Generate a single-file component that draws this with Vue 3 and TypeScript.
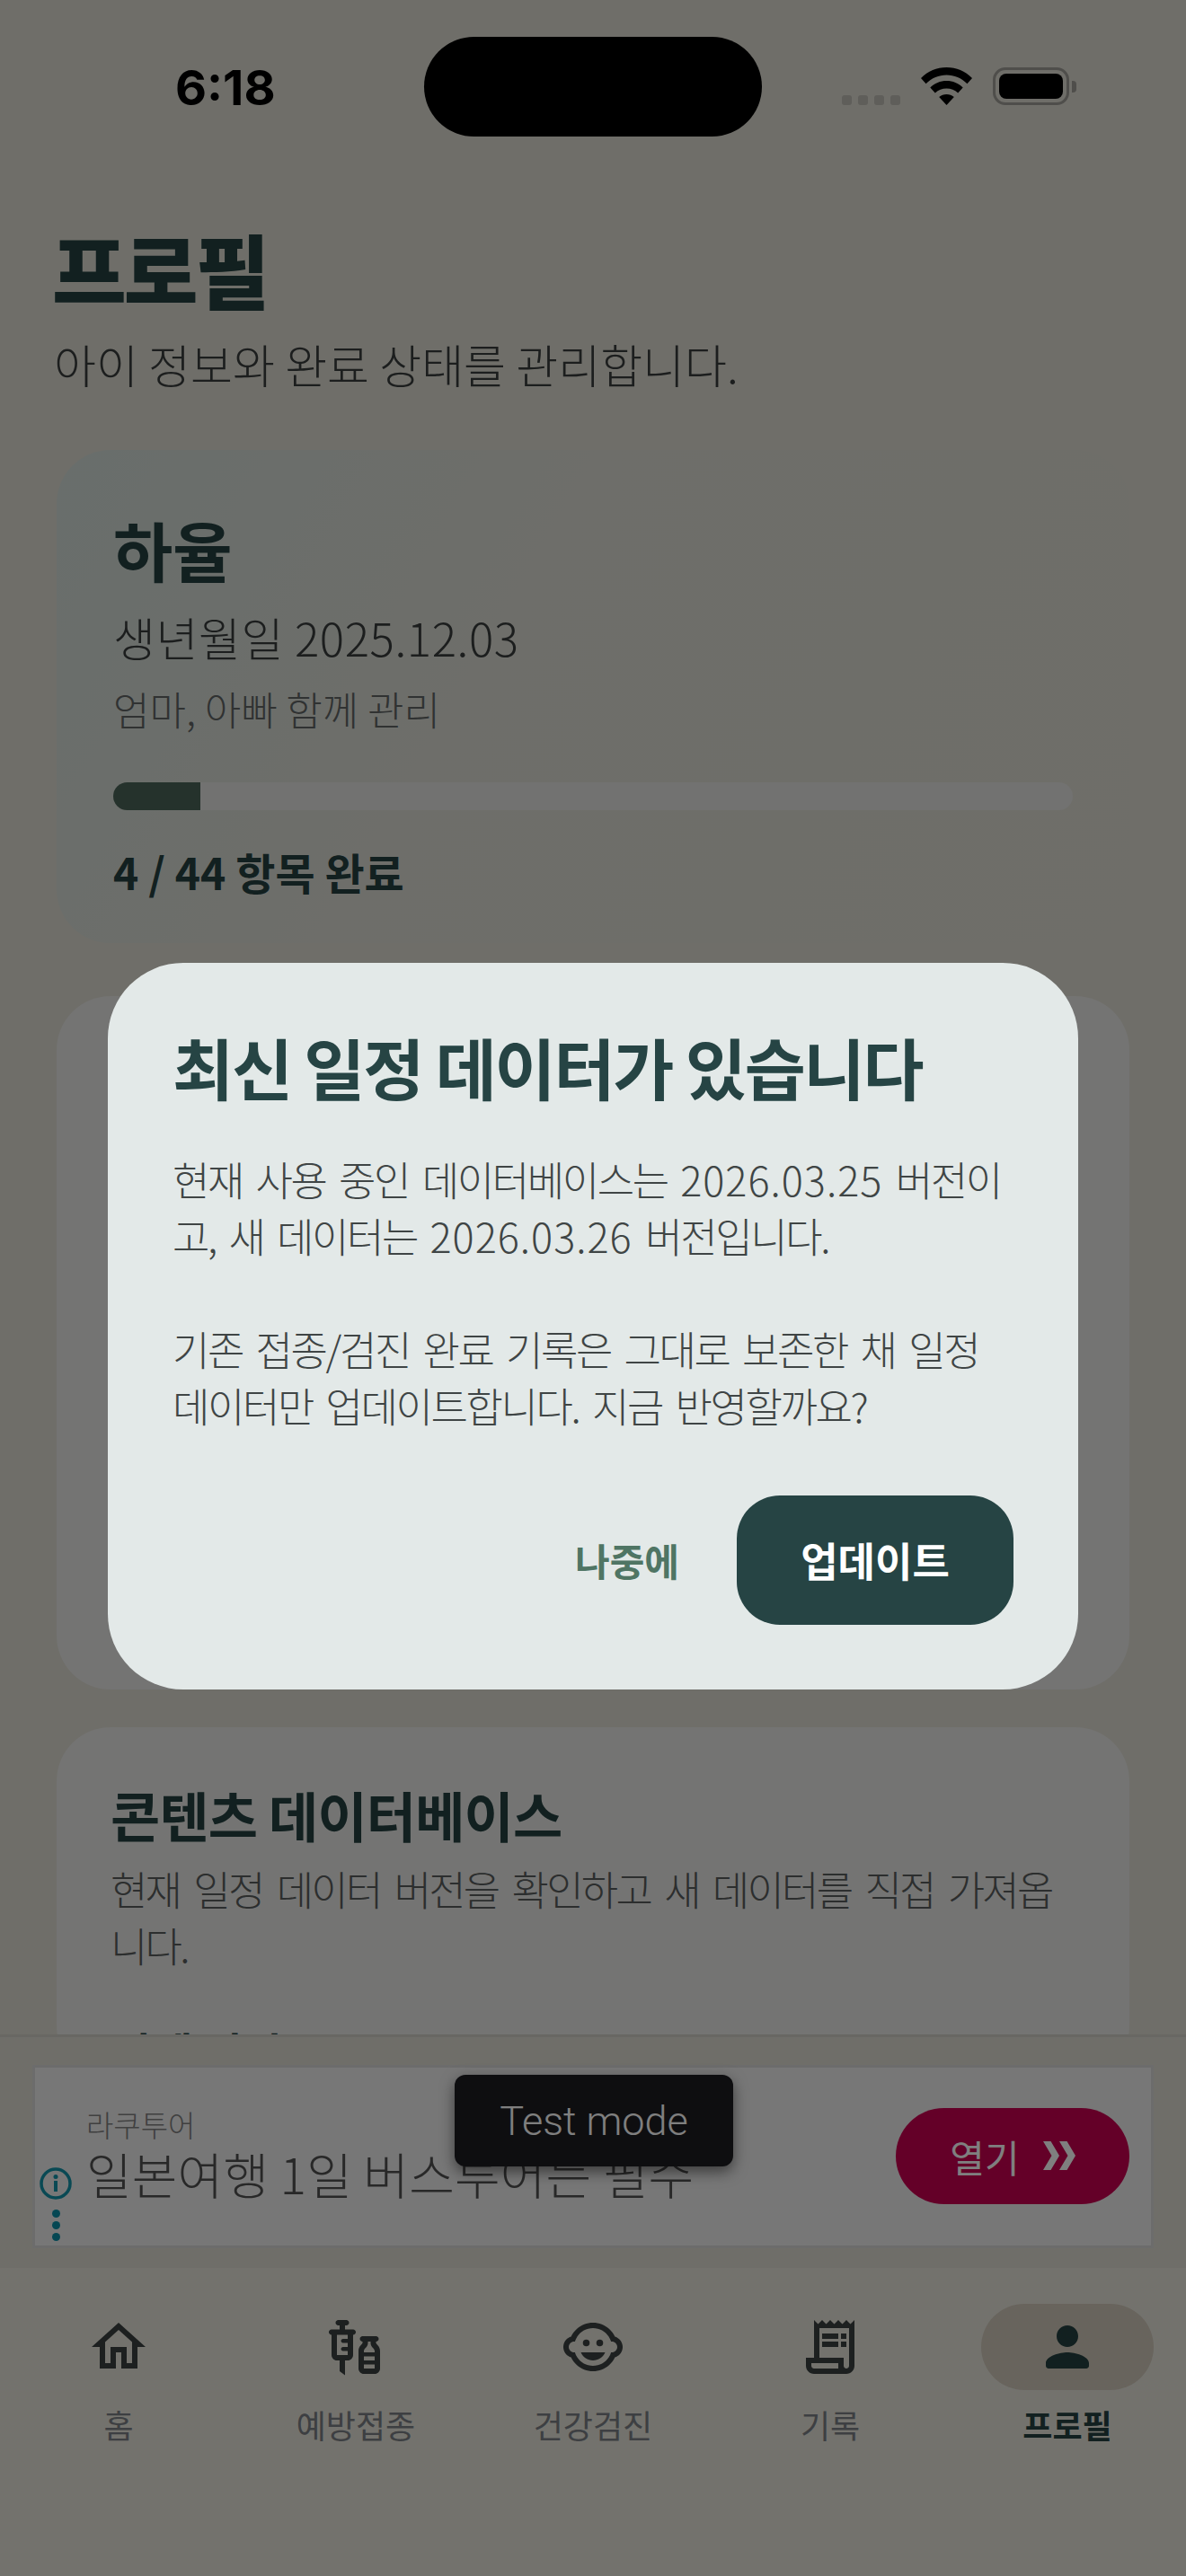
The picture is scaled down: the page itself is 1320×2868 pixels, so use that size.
<script setup lang="ts">
interface Tab {
  label: string
  active?: boolean
  paths: string[]
  dots?: [number, number][]
}

const tabs: Tab[] = [
  { label: '홈', paths: ['M12 5.69l5 4.5V18h-2v-6H9v6H7v-7.81l5-4.5M12 3L2 12h3v8h6v-6h2v6h6v-8h3L12 3z'] },
  {
    label: '예방접종',
    paths: ['M11 5.5H8V4h.5c.55 0 1-.45 1-1s-.45-1-1-1h-3c-.55 0-1 .45-1 1s.45 1 1 1H6v1.5H3c-.55 0-1 .45-1 1s.45 1 1 1V15c0 1.1.9 2 2 2h1v4l2 1.5V17h1c1.1 0 2-.9 2-2V7.5c.55 0 1-.45 1-1s-.45-1-1-1zM9 9H7.25c-.41 0-.75.34-.75.75s.34.75.75.75H9V12H7.25c-.41 0-.75.34-.75.75s.34.75.75.75H9V15H5V7.5h4V9zm10.5 1.5V10c.55 0 1-.45 1-1s-.45-1-1-1h-5c-.55 0-1 .45-1 1s.45 1 1 1v.5c0 .5-1.5 1.16-1.5 3V20c0 1.1.9 2 2 2h4c1.1 0 2-.9 2-2v-6.5c0-1.84-1.5-2.5-1.5-3zm-3 0V10h1v.5c0 1.6 1.5 2 1.5 3v.5h-4v-.5c0-1 1.5-1.4 1.5-3zm2.5 5V17h-4v-1.5h4zM15 20v-1.5h4V20h-4z'],
  },
  {
    label: '건강검진',
    paths: ['M22.94 12.66c.04-.21.06-.43.06-.66s-.02-.45-.06-.66c-.25-1.51-1.36-2.74-2.81-3.17-.53-1.12-1.28-2.1-2.19-2.91C16.36 3.85 14.28 3 12 3s-4.36.85-5.94 2.26c-.92.81-1.67 1.8-2.19 2.91-1.45.43-2.56 1.65-2.81 3.17-.04.21-.06.43-.06.66s.02.45.06.66c.25 1.51 1.36 2.74 2.81 3.17.52 1.11 1.27 2.09 2.17 2.89C7.62 20.14 9.71 21 12 21s4.38-.86 5.97-2.28c.9-.8 1.65-1.79 2.17-2.89 1.44-.43 2.55-1.65 2.8-3.17zM19 14c-.1 0-.19-.02-.29-.03-.2.67-.49 1.29-.86 1.86C16.6 17.74 14.45 19 12 19s-4.6-1.26-5.85-3.17c-.37-.57-.66-1.19-.86-1.86-.1.01-.19.03-.29.03-1.1 0-2-.9-2-2s.9-2 2-2c.1 0 .19.02.29.03.2-.67.49-1.29.86-1.86C7.4 6.26 9.55 5 12 5s4.6 1.26 5.85 3.17c.37.57.66 1.19.86 1.86.1-.01.19-.03.29-.03 1.1 0 2 .9 2 2s-.9 2-2 2zM7.5 14c.76 1.77 2.49 3 4.5 3s3.74-1.23 4.5-3h-9z'],
    dots: [[14.5, 10.5], [9.5, 10.5]],
  },
  {
    label: '기록',
    paths: ['M19.5 3.5L18 2l-1.5 1.5L15 2l-1.5 1.5L12 2l-1.5 1.5L9 2 7.5 3.5 6 2v14H3v3c0 1.66 1.34 3 3 3h12c1.66 0 3-1.34 3-3V2l-1.5 1.5zM15 20H6c-.55 0-1-.45-1-1v-1h10v2zm4-1c0 .55-.45 1-1 1s-1-.45-1-1v-3H8V5h11v14z', 'M9 7h6v2H9zM16 7h2v2h-2zM9 10h6v2H9zM16 10h2v2h-2z'],
  },
  {
    label: '프로필',
    active: true,
    paths: ['M12 12c2.21 0 4-1.79 4-4s-1.79-4-4-4-4 1.79-4 4 1.79 4 4 4zm0 2c-2.67 0-8 1.34-8 4v1c0 .55.45 1 1 1h14c.55 0 1-.45 1-1v-1c0-2.66-5.33-4-8-4z'],
  },
]

const total = 44
const done = 4
const progress = `${(done / total) * 100}%`
</script>

<template>
  <div class="screen">
    <div class="status">
      <span class="time">6:18</span>
      <div class="island"></div>
      <div class="status-right">
        <div class="signal"><i></i><i></i><i></i><i></i></div>
        <svg class="wifi" viewBox="0 0 57 42">
          <path d="M28.5 0C17.5 0 7.8 4.2 0 12l5.6 6.2C12 12 19.8 8.6 28.5 8.6S45 12 51.4 18.2L57 12C49.2 4.2 39.5 0 28.5 0z" />
          <path d="M28.5 15C21.5 15 15.3 17.6 10.3 22.4L15.8 28.5C19.3 25.3 23.7 23.5 28.5 23.5S37.7 25.3 41.2 28.5L46.7 22.4C41.7 17.6 35.5 15 28.5 15z" />
          <path d="M28.5 30C25.3 30 22.5 31.1 20.2 33.1L28.5 42L36.8 33.1C34.5 31.1 31.7 30 28.5 30z" />
        </svg>
        <div class="battery"><div class="battery-fill"></div></div>
        <div class="battery-cap"></div>
      </div>
    </div>

    <main class="content">
      <h1 class="page-title">프로필</h1>
      <p class="page-sub">아이 정보와 완료 상태를 관리합니다.</p>

      <section class="child-card">
        <h2 class="child-name">하율</h2>
        <p class="child-birth">생년월일 2025.12.03</p>
        <p class="child-note">엄마, 아빠 함께 관리</p>
        <div class="track"><div class="track-fill" :style="{ width: progress }"></div></div>
        <p class="track-label">{{ done }} / {{ total }} 항목 완료</p>
      </section>

      <section class="card card-hidden"></section>

      <section class="card">
        <h2 class="card-title">콘텐츠 데이터베이스</h2>
        <p class="card-text">현재 일정 데이터 버전을 확인하고 새 데이터를 직접 가져옵니다.</p>
        <p class="card-sub">상세 버전</p>
      </section>
    </main>

    <div class="ad-area">
      <div class="ad">
        <div class="ad-marks">
          <svg class="ad-info" viewBox="0 0 36 36">
            <circle cx="18" cy="18" r="16" fill="none" stroke="#1293a8" stroke-width="3.5" />
            <circle cx="18" cy="10.5" r="2.5" fill="#1293a8" />
            <rect x="16" y="15" width="4" height="12" fill="#1293a8" />
          </svg>
          <div class="ad-dots"><i></i><i></i><i></i></div>
        </div>
        <div class="ad-copy">
          <span class="ad-brand">라쿠투어</span>
          <span class="ad-head">일본여행 1일 버스투어는 필수</span>
        </div>
        <div class="ad-btn">
          <span>열기</span>
          <svg class="ad-chev" viewBox="0 0 38 34">
            <path d="M0 0h9l10 17L9 34H0l10-17zM19 0h9l10 17-10 17h-9l10-17z" />
          </svg>
        </div>
        <div class="test-badge">Test mode</div>
      </div>
    </div>

    <nav class="tabs">
      <div v-for="tab in tabs" :key="tab.label" class="tab" :class="{ active: tab.active }">
        <div class="tab-icon">
          <svg viewBox="0 0 24 24">
            <path v-for="d in tab.paths" :key="d" :d="d" />
            <circle v-for="c in tab.dots" :key="c[0]" :cx="c[0]" :cy="c[1]" r="1.25" />
          </svg>
        </div>
        <span class="tab-label">{{ tab.label }}</span>
      </div>
    </nav>

    <div class="scrim">
      <div class="dialog">
        <h2 class="dialog-title">최신 일정 데이터가 있습니다</h2>
        <p class="dialog-text">
          현재 사용 중인 데이터베이스는 <span class="num">2026.03.25</span> 버전이고, 새 데이터는 <span class="num">2026.03.26</span> 버전입니다.<br /><br />기존 접종/검진 완료 기록은 그대로 보존한 채 일정<br />데이터만 업데이트합니다. 지금 반영할까요?
        </p>
        <div class="dialog-actions">
          <button class="btn-later">나중에</button>
          <button class="btn-update">업데이트</button>
        </div>
      </div>
    </div>
  </div>
</template>

<style>
html, body {
  margin: 0;
  background: #dedcd2;
}
</style>

<style scoped>
.screen {
  position: relative;
  width: 1320px;
  height: 2868px;
  overflow: hidden;
  display: flex;
  flex-direction: column;
  background: #dedcd2;
  font-family: "Noto Sans CJK KR", "Noto Sans", sans-serif;
  color: #244040;
}

h1, h2, p {
  margin: 0;
}

/* status bar stays above the scrim */
.status {
  position: relative;
  z-index: 3;
  height: 248px;
  flex: none;
}
.time {
  position: absolute;
  left: 195px;
  top: 66px;
  font: 700 54px/64px "Inter", "Liberation Sans", sans-serif;
  letter-spacing: 0;
  color: #000;
}
.island {
  position: absolute;
  left: 472px;
  top: 41px;
  width: 376px;
  height: 111px;
  border-radius: 56px;
  background: #000;
}
.status-right {
  position: absolute;
  left: 937px;
  top: 75px;
  height: 42px;
  display: flex;
  align-items: flex-end;
}
.signal {
  display: flex;
  gap: 7px;
  width: 88px;
}
.signal i {
  width: 11px;
  height: 11px;
  border-radius: 3px;
  background: #5f5e5a;
}
.wifi {
  width: 57px;
  height: 42px;
  fill: #000;
}
.battery {
  box-sizing: border-box;
  width: 85px;
  height: 42px;
  margin-left: 23px;
  padding: 4px;
  border: 3px solid #4f4e4b;
  border-radius: 14px;
}
.battery-fill {
  height: 100%;
  border-radius: 8px;
  background: #000;
}
.battery-cap {
  width: 5px;
  height: 13px;
  margin: 0 0 14px 3px;
  border-radius: 0 4px 4px 0;
  background: #4f4e4b;
}

.content {
  flex: 1;
  min-height: 0;
  overflow: hidden;
  padding: 0 63px;
}
.page-title {
  margin-left: -5px;
  font-size: 90px;
  line-height: 100px;
  font-weight: 900;
  letter-spacing: -3px;
}
.page-sub {
  margin: 24px 0 0 -3px;
  font-size: 51px;
  line-height: 66px;
  font-weight: 300;
  color: #383c3c;
}

.child-card {
  margin-top: 63px;
  height: 549px;
  box-sizing: border-box;
  padding: 67px 63px 0;
  border-radius: 60px;
  background: linear-gradient(120deg, #d2dcd8 0%, #dcdcd4 40%, #dedcd2 100%);
}
.child-name {
  font-size: 72px;
  line-height: 86px;
  font-weight: 700;
}
.child-birth {
  margin-top: 21px;
  font-size: 51px;
  line-height: 68px;
  letter-spacing: 0.6px;
  font-weight: 300;
  color: #383c3c;
}
.child-note {
  margin-top: 18px;
  font-size: 44px;
  line-height: 56px;
  font-weight: 300;
  color: #606464;
}
.track {
  margin-top: 54px;
  height: 31px;
  border-radius: 16px;
  background: #e4e4e2;
  overflow: hidden;
}
.track-fill {
  height: 100%;
  background: #4a6458;
}
.track-label {
  margin-top: 34px;
  font-size: 48px;
  line-height: 68px;
  font-weight: 700;
}

.card {
  margin-top: 42px;
  box-sizing: border-box;
  padding: 59px 63px 0;
  border-radius: 60px;
  background: #e8e8e6;
}
.card-hidden {
  margin-top: 59px;
  height: 772px;
}
.card-title {
  margin-left: -3px;
  font-size: 60px;
  line-height: 76px;
  font-weight: 700;
  letter-spacing: -0.8px;
}
.card-text {
  margin: 13px 0 0 -3px;
  font-size: 45px;
  line-height: 63px;
  letter-spacing: -2.8px;
  word-spacing: 8px;
  font-weight: 300;
  color: #585c5c;
}
.card-sub {
  margin-top: 54px;
  font-size: 48px;
  line-height: 64px;
  font-weight: 700;
}

.ad-area {
  flex: none;
  box-sizing: border-box;
  height: 260px;
  padding: 31px 36px 0 36px;
  border-top: 3px solid #d0cec6;
  background: #dedcd2;
}
.ad {
  position: relative;
  box-sizing: border-box;
  height: 204px;
  padding-right: 24px;
  display: flex;
  align-items: center;
  border: 3px solid #d8d8d8;
  background: #eeeeee;
}
.ad-marks {
  position: absolute;
  left: 5px;
  top: 111px;
  width: 36px;
  display: flex;
  flex-direction: column;
  align-items: center;
  gap: 11px;
}
.ad-info {
  display: block;
  width: 36px;
  height: 36px;
}
.ad-dots {
  display: flex;
  flex-direction: column;
  gap: 4px;
}
.ad-dots i {
  display: block;
  width: 9px;
  height: 9px;
  border-radius: 50%;
  background: #0a8ea6;
}
.ad-copy {
  flex: 1;
  display: flex;
  flex-direction: column;
  padding: 0 0 8px 57px;
}
.ad-brand {
  font-size: 33px;
  line-height: 44px;
  font-weight: 300;
  color: #808080;
}
.ad-head {
  font-size: 55px;
  line-height: 64px;
  font-weight: 300;
  letter-spacing: 0.2px;
  color: #505050;
}
.ad-btn {
  width: 260px;
  height: 107px;
  margin-bottom: 2px;
  display: flex;
  align-items: center;
  justify-content: center;
  gap: 26px;
  border-radius: 54px;
  background: #c80050;
  font-size: 42px;
  color: #fff;
}
.ad-chev {
  width: 36px;
  height: 34px;
  fill: #fff;
}
.test-badge {
  position: absolute;
  left: 467px;
  top: 8px;
  width: 310px;
  height: 102px;
  display: flex;
  align-items: center;
  justify-content: center;
  border-radius: 12px;
  background: #1c1c20;
  box-shadow: 0 6px 16px rgba(0, 0, 0, 0.5);
  font-family: "Roboto", sans-serif;
  font-size: 45px;
  font-weight: 300;
  color: #fff;
}

.tabs {
  flex: none;
  height: 343px;
  display: grid;
  grid-template-columns: repeat(5, 1fr);
  background: #e6e4da;
}
.tab {
  display: flex;
  flex-direction: column;
  align-items: center;
  padding-top: 40px;
}
.tab-icon {
  width: 192px;
  height: 96px;
  display: flex;
  align-items: center;
  justify-content: center;
  border-radius: 48px;
}
.tab-icon svg {
  width: 72px;
  height: 72px;
  fill: #3a4040;
}
.tab.active .tab-icon {
  background: #d0c8ba;
}
.tab.active .tab-icon svg {
  fill: #244040;
}
.tab-label {
  margin-top: 14px;
  font-size: 36px;
  line-height: 48px;
  color: #7a7e84;
}
.tab.active .tab-label {
  font-weight: 700;
  color: #244040;
}

.scrim {
  position: absolute;
  inset: 0;
  z-index: 2;
  box-sizing: border-box;
  padding: 84px 120px 0;
  display: flex;
  align-items: center;
  background: rgba(0, 0, 0, 0.5);
}
.dialog {
  width: 100%;
  box-sizing: border-box;
  padding: 72px;
  border-radius: 84px;
  background: #e3e9e8;
}
.dialog-title {
  margin-top: -5px;
  font-size: 74px;
  line-height: 96px;
  font-weight: 700;
  letter-spacing: -2.2px;
  color: #264444;
}
.dialog-text {
  margin-top: 46px;
  font-size: 45px;
  line-height: 63px;
  letter-spacing: -2.4px;
  word-spacing: 7px;
  font-weight: 300;
  color: #3f4545;
}
.num {
  letter-spacing: 1px;
}
.dialog-actions {
  margin-top: 69px;
  display: flex;
  justify-content: flex-end;
  align-items: center;
  gap: 16px;
}
.dialog-actions button {
  border: 0;
  font-family: inherit;
  font-weight: 700;
}
.btn-later {
  padding: 0 48px;
  background: none;
  font-size: 42px;
  color: #4f7564;
}
.btn-update {
  width: 308px;
  height: 144px;
  border-radius: 48px;
  background: #264444;
  font-size: 45px;
  color: #fff;
}
</style>
